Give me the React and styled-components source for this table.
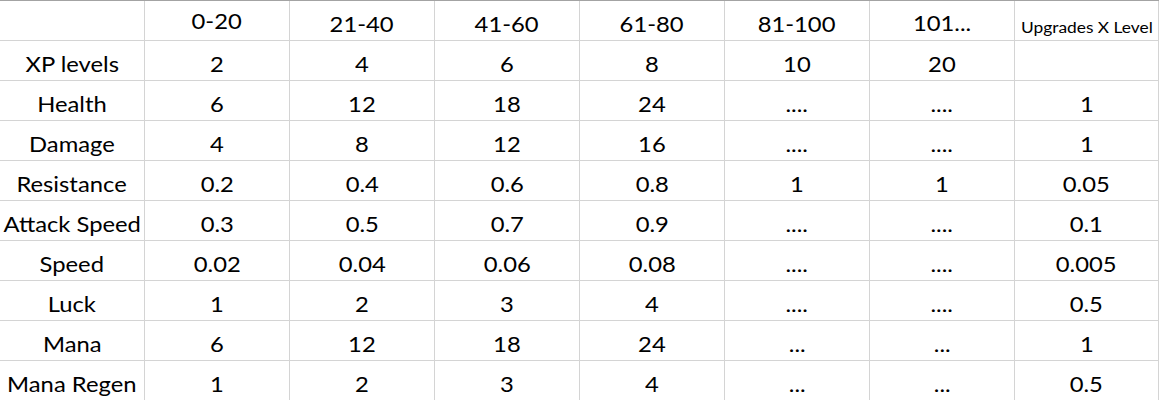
import React from "react";
import styled, { createGlobalStyle } from "styled-components";

const Global = createGlobalStyle`
  html, body { margin: 0; padding: 0; background: #ffffff; }
  body { font-family: Lato, "Open Sans", sans-serif; color: #000; }
`;

const Sheet = styled.div`
  display: grid;
  grid-template-columns: repeat(7, 145px) 144px;
  width: 1159px;
  border-top: 1px solid #a3a3a3;
  overflow: hidden;
`;

const Cell = styled.div`
  box-sizing: border-box;
  height: 40px;
  border-right: 1px solid #d4d4d4;
  border-bottom: 1px solid #d4d4d4;
  display: flex;
  justify-content: center;
  align-items: flex-end;
  padding-bottom: ${(p) => 6 + (p.$lift || 0)}px;
  white-space: nowrap;
`;

const Text = styled.span`
  display: inline-block;
  font-family: Lato, "Open Sans", sans-serif;
  font-size: ${(p) => (p.$small ? 15.5 : 20.5)}px;
  line-height: 1;
  color: #000;
  transform: scaleX(${(p) => (p.$small ? 1.12 : 1.16)});
  transform-origin: center bottom;
`;

const header = ["", "0-20", "21-40", "41-60", "61-80", "81-100", "101...", "Upgrades X Level"];

const rows = [
  ["XP levels", "2", "4", "6", "8", "10", "20", ""],
  ["Health", "6", "12", "18", "24", "....", "....", "1"],
  ["Damage", "4", "8", "12", "16", "....", "....", "1"],
  ["Resistance", "0.2", "0.4", "0.6", "0.8", "1", "1", "0.05"],
  ["Attack Speed", "0.3", "0.5", "0.7", "0.9", "....", "....", "0.1"],
  ["Speed", "0.02", "0.04", "0.06", "0.08", "....", "....", "0.005"],
  ["Luck", "1", "2", "3", "4", "....", "....", "0.5"],
  ["Mana", "6", "12", "18", "24", "...", "...", "1"],
  ["Mana Regen", "1", "2", "3", "4", "...", "...", "0.5"],
];

const headerLift = { 1: 3, 6: 1, 7: -1 };

export default function App() {
  return (
    <>
      <Global />
      <Sheet>
        {header.map((h, i) => (
          <Cell key={"h" + i} $lift={headerLift[i] || 0}>
            <Text $small={i === 7}>{h}</Text>
          </Cell>
        ))}
        {rows.map((r, ri) =>
          r.map((v, ci) => (
            <Cell key={ri + "-" + ci}>
              <Text>{v}</Text>
            </Cell>
          ))
        )}
      </Sheet>
    </>
  );
}
